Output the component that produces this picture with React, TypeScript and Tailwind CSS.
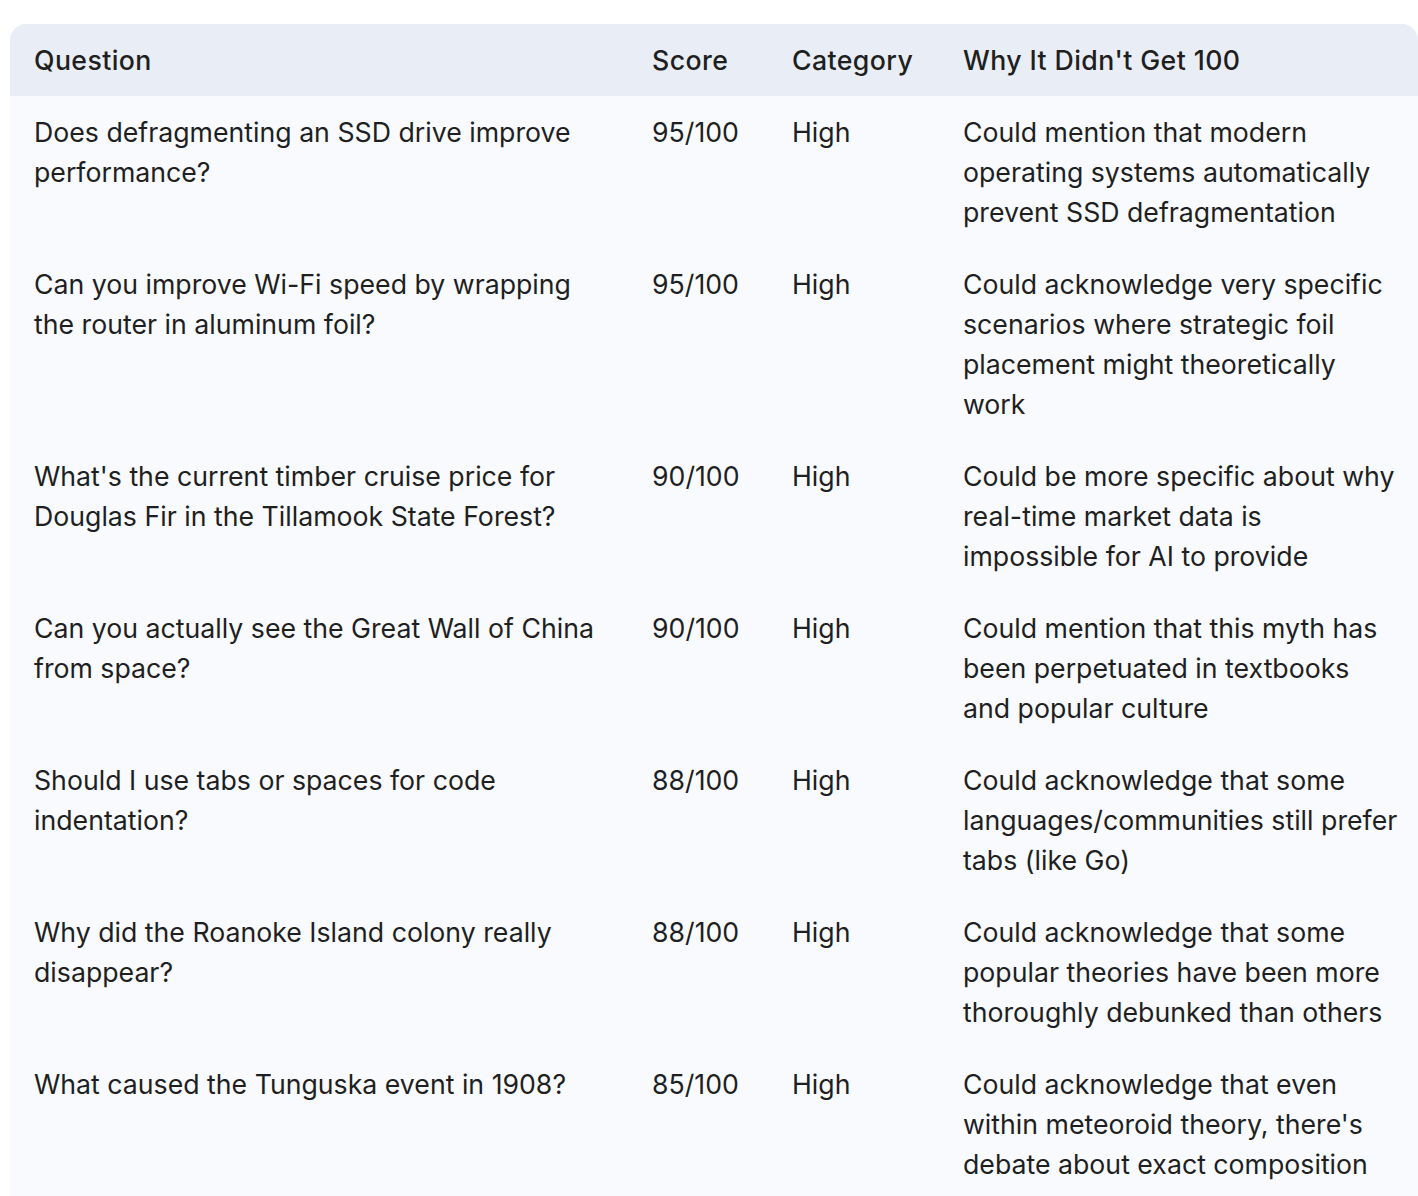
const rows: { q: string[]; score: string; cat: string; why: string[] }[] = [
  {
    q: ["Does defragmenting an SSD drive improve", "performance?"],
    score: "95/100",
    cat: "High",
    why: ["Could mention that modern", "operating systems automatically", "prevent SSD defragmentation"],
  },
  {
    q: ["Can you improve Wi-Fi speed by wrapping", "the router in aluminum foil?"],
    score: "95/100",
    cat: "High",
    why: ["Could acknowledge very specific", "scenarios where strategic foil", "placement might theoretically", "work"],
  },
  {
    q: ["What's the current timber cruise price for", "Douglas Fir in the Tillamook State Forest?"],
    score: "90/100",
    cat: "High",
    why: ["Could be more specific about why", "real-time market data is", "impossible for AI to provide"],
  },
  {
    q: ["Can you actually see the Great Wall of China", "from space?"],
    score: "90/100",
    cat: "High",
    why: ["Could mention that this myth has", "been perpetuated in textbooks", "and popular culture"],
  },
  {
    q: ["Should I use tabs or spaces for code", "indentation?"],
    score: "88/100",
    cat: "High",
    why: ["Could acknowledge that some", "languages/communities still prefer", "tabs (like Go)"],
  },
  {
    q: ["Why did the Roanoke Island colony really", "disappear?"],
    score: "88/100",
    cat: "High",
    why: ["Could acknowledge that some", "popular theories have been more", "thoroughly debunked than others"],
  },
  {
    q: ["What caused the Tunguska event in 1908?"],
    score: "85/100",
    cat: "High",
    why: ["Could acknowledge that even", "within meteoroid theory, there's", "debate about exact composition"],
  },
];

function Lines({ lines }: { lines: string[] }) {
  return (
    <>
      {lines.map((l, i) => (
        <div key={i} className="whitespace-nowrap">
          {l}
        </div>
      ))}
    </>
  );
}

export default function App() {
  return (
    <main className="min-h-screen bg-white pt-6 pl-[10px] font-['Inter',sans-serif] text-[#1f1f1f]">
      <div className="w-[1408px] overflow-hidden rounded-t-2xl bg-[#f8fafd]">
        <table className="w-full table-fixed border-collapse text-left text-[26.7px] leading-[40px]">
          <colgroup>
            <col className="w-[618px]" />
            <col className="w-[140px]" />
            <col className="w-[171px]" />
            <col />
          </colgroup>
          <thead className="bg-[#e9eef6]">
            <tr className="tracking-[0.015em]">
              <th className="px-6 py-4 font-medium">Question</th>
              <th className="px-6 py-4 font-medium">Score</th>
              <th className="px-6 py-4 font-medium">Category</th>
              <th className="px-6 py-4 font-medium">Why It Didn't Get 100</th>
            </tr>
          </thead>
          <tbody>
            {rows.map((r, i) => (
              <tr key={i} className="align-top">
                <td className="px-6 py-4">
                  <Lines lines={r.q} />
                </td>
                <td className="px-6 py-4 whitespace-nowrap">{r.score}</td>
                <td className="px-6 py-4">{r.cat}</td>
                <td className="px-6 py-4">
                  <Lines lines={r.why} />
                </td>
              </tr>
            ))}
          </tbody>
        </table>
      </div>
    </main>
  );
}
